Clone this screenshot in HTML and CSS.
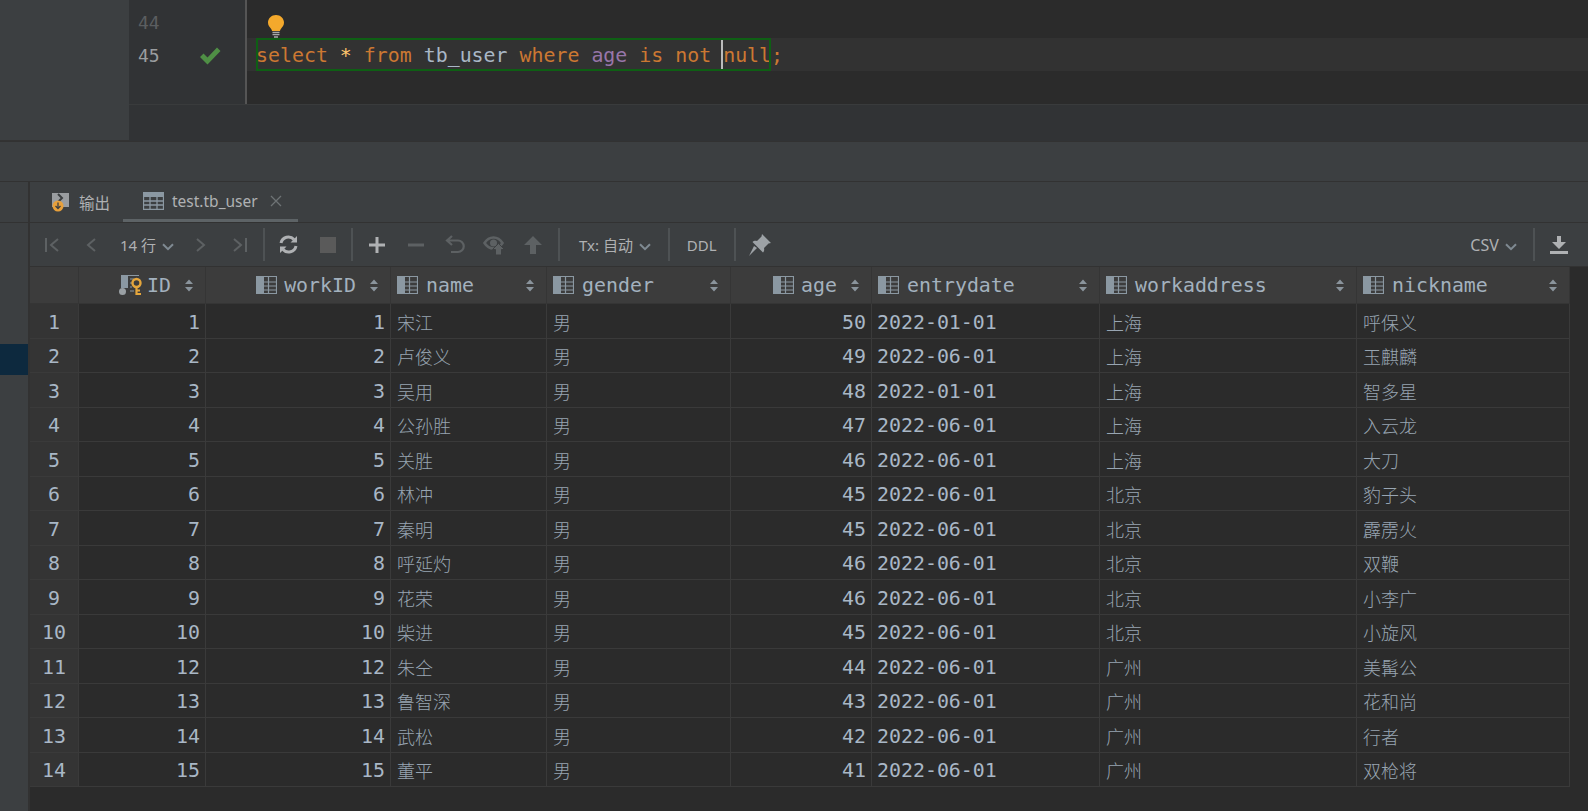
FILE: index.html
```html
<!DOCTYPE html>
<html lang="zh">
<head>
<meta charset="utf-8">
<title>test.tb_user</title>
<link rel="stylesheet" href="styles.css">
</head>
<body>
<svg class="defs" width="0" height="0">
  <symbol id="col" viewBox="0 0 21 18">
    <rect x="0" y="0" width="8" height="18" fill="#8b98a2"/>
    <path d="M8 .5H20.500V17.500H8M12.500 .5V17.500M8 6H20.500M8 10H20.500M8 14H20.500" fill="none" stroke="#8b98a2" stroke-width="1.200"/>
  </symbol>
  <symbol id="sort" viewBox="0 0 8 13">
    <path d="M4 .5L8 5H0ZM4 12.500L0 8H8Z" fill="#8a949c"/>
  </symbol>
  <symbol id="chev" viewBox="0 0 12 8">
    <path d="M1 1.200L6 6.200L11 1.200" fill="none" stroke="#7f8a92" stroke-width="2"/>
  </symbol>
</svg>

<section class="editor-area">
  <div class="side-panel"></div>
  <div class="editor-col">
    <div class="editor">
      <div class="gutter">
        <div class="gutter-line dim"><span>44</span></div>
        <div class="gutter-line"><span>45</span>
          <svg class="check" width="22" height="18" viewBox="0 0 22 18"><path d="M1 10L4.500 6.500L8.500 10.500L18 .5L21.500 4L8.500 17.500Z" fill="#4f8f45"/></svg>
        </div>
      </div>
      <div class="code">
        <div class="code-line bulb-line"><svg class="bulb" width="16" height="23" viewBox="0 0 16 23"><path d="M8 0C3.500 0 0 3.400 0 7.600C0 10.400 1.500 12 3 13.800C3.700 14.700 4 15.400 4 16H12C12 15.400 12.300 14.700 13 13.800C14.500 12 16 10.400 16 7.600C16 3.400 12.500 0 8 0Z" fill="#f4a92c"/><path d="M4.500 17.500H11.500M4.500 19.700H11.500M6 22H10" stroke="#a9a9a9" stroke-width="1.300"/></svg></div>
        <div class="code-line current"><span class="stmt"><span class="kw">select</span> <span class="star">*</span> <span class="kw">from</span> <span class="id">tb_user</span> <span class="kw">where</span> <span class="col-ref">age</span> <span class="kw">is</span> <span class="kw">not</span> <span class="caret kw">null</span></span><span class="kw">;</span></div>
      </div>
    </div>
    <div class="editor-foot"></div>
  </div>
</section>
<div class="status-bar"></div>

<section class="workspace">
  <aside class="rail"><div class="rail-top"></div><div class="rail-sel"></div></aside>
  <div class="results">
    <nav class="tabs">
      <div class="tab">
        <svg width="20" height="20" viewBox="0 0 20 20"><rect x="1" y="1" width="17" height="14" fill="#9a9da0"/><path d="M7 2L11 6L7 10" fill="none" stroke="#3c3f41" stroke-width="2"/><circle cx="7" cy="14" r="5.500" fill="#e8a03a"/><path d="M7 10.500V16M4.500 14L7 16.500L9.500 14" fill="none" stroke="#3c3f41" stroke-width="1.300"/></svg>
        <span>输出</span>
      </div>
      <div class="tab active">
        <svg width="21" height="18" viewBox="0 0 21 18"><path d="M.5 .5H20.500V17.500H.5ZM7 5V17.500M14 5V17.500M.5 9H20.500M.5 13H20.500" fill="none" stroke="#8b98a2" stroke-width="1.300"/><rect width="21" height="5" fill="#8b98a2"/></svg>
        <span>test.tb_user</span>
        <svg class="close" width="12" height="12" viewBox="0 0 12 12"><path d="M1 1L11 11M11 1L1 11" stroke="#6e7375" stroke-width="1.300"/></svg>
      </div>
    </nav>

    <div class="toolbar">
      <span class="btn"><svg width="16" height="16" viewBox="0 0 16 16"><path d="M2 1V15M14 2L7 8L14 14" fill="none" stroke="#5d6163" stroke-width="2"/></svg></span>
      <span class="btn"><svg width="12" height="16" viewBox="0 0 12 16"><path d="M10 2L3 8L10 14" fill="none" stroke="#5d6163" stroke-width="2"/></svg></span>
      <span class="rows-pick">14 行 <svg width="12" height="8"><use href="#chev"/></svg></span>
      <span class="btn"><svg width="12" height="16" viewBox="0 0 12 16"><path d="M2 2L9 8L2 14" fill="none" stroke="#5d6163" stroke-width="2"/></svg></span>
      <span class="btn"><svg width="16" height="16" viewBox="0 0 16 16"><path d="M14 1V15M2 2L9 8L2 14" fill="none" stroke="#5d6163" stroke-width="2"/></svg></span>
      <i class="sep"></i>
      <span class="btn"><svg width="19" height="19" viewBox="0 0 19 19"><path d="M2 8A7.500 7.500 0 0 1 15 4.500M17 11A7.500 7.500 0 0 1 4 14.500" fill="none" stroke="#afb1b3" stroke-width="3"/><path d="M11.500 7.500H18V1ZM7.500 11.500H1V18Z" fill="#afb1b3"/></svg></span>
      <span class="btn"><svg width="16" height="16"><rect width="16" height="16" fill="#5a5a5a"/></svg></span>
      <i class="sep"></i>
      <span class="btn"><svg width="16" height="16" viewBox="0 0 16 16"><path d="M8 0V16M0 8H16" stroke="#afb1b3" stroke-width="3"/></svg></span>
      <span class="btn"><svg width="16" height="16" viewBox="0 0 16 16"><path d="M0 8H16" stroke="#5d6163" stroke-width="3"/></svg></span>
      <span class="btn"><svg width="20" height="20" viewBox="0 0 20 20"><path d="M7 1L2 5.500L7 10M2.500 5.500H13A5.500 5.500 0 0 1 13 17H6" fill="none" stroke="#5d6163" stroke-width="2.200"/></svg></span>
      <span class="btn"><svg width="22" height="22" viewBox="0 0 22 22"><path d="M1.500 9C4 5 7.500 3.500 10.500 3.500C13.500 3.500 17 5 19.500 9C17 13 13.500 14.500 10.500 14.500C7.500 14.500 4 13 1.500 9Z" fill="none" stroke="#5d6163" stroke-width="2.600"/><circle cx="10.500" cy="9" r="3.500" fill="#5d6163"/><path d="M15.500 9.500L21.500 15.500H18.500V21H12.500V15.500H9.500Z" fill="#5d6163" stroke="#3c3f41" stroke-width="1"/></svg></span>
      <span class="btn"><svg width="18" height="18" viewBox="0 0 18 18"><path d="M9 0L18 9H12V18H6V9H0Z" fill="#5d6163"/></svg></span>
      <i class="sep tx-sep"></i>
      <span class="tb-text tx">Tx: 自动 <svg width="12" height="8"><use href="#chev"/></svg></span>
      <i class="sep wide"></i>
      <span class="tb-text">DDL</span>
      <i class="sep wide"></i>
      <span class="pin"><svg width="22" height="22" viewBox="0 0 22 22"><path d="M13 0L22 9L19.500 9.500L15 14C15.500 16 15 17.500 14 18.500L3.500 8C4.500 7 6 6.500 8 7L12.500 2.500Z M8 14L0 22L5 12Z" fill="#9da2a6"/></svg></span>
      <span class="tb-text csv">CSV <svg width="12" height="8"><use href="#chev"/></svg></span>
      <i class="sep csv-sep"></i>
      <span class="dl"><svg width="18" height="18" viewBox="0 0 18 18"><path d="M7 0H11V6H16L9 13L2 6H7Z" fill="#afb1b3"/><rect y="15" width="18" height="3" fill="#afb1b3"/></svg></span>
    </div>

    <div class="grid">
      <div class="hd corner"></div>
      <div class="hd right"><svg class="ic key-ic" width="23" height="20" viewBox="0 0 23 20"><rect x="2" y="0" width="7" height="13" fill="#8b98a2"/><path d="M9 .5H20M11 4H15M11 8H14M11 12H13M11 16H15" stroke="#8b98a2" stroke-width="1.200"/><circle cx="3.500" cy="16.500" r="3.500" fill="#9aa0a4"/><circle cx="17.500" cy="8" r="4" fill="none" stroke="#e5a63c" stroke-width="2.400"/><path d="M17.500 12V20M17.500 19H22M17.500 15.500H21" stroke="#e5a63c" stroke-width="2.200" fill="none"/></svg><span>ID</span><svg class="sort" width="8" height="13"><use href="#sort"/></svg></div>
      <div class="hd right"><svg class="ic" width="21" height="18"><use href="#col"/></svg><span>workID</span><svg class="sort" width="8" height="13"><use href="#sort"/></svg></div>
      <div class="hd"><svg class="ic" width="21" height="18"><use href="#col"/></svg><span>name</span><svg class="sort" width="8" height="13"><use href="#sort"/></svg></div>
      <div class="hd"><svg class="ic" width="21" height="18"><use href="#col"/></svg><span>gender</span><svg class="sort" width="8" height="13"><use href="#sort"/></svg></div>
      <div class="hd right"><svg class="ic" width="21" height="18"><use href="#col"/></svg><span>age</span><svg class="sort" width="8" height="13"><use href="#sort"/></svg></div>
      <div class="hd"><svg class="ic" width="21" height="18"><use href="#col"/></svg><span>entrydate</span><svg class="sort" width="8" height="13"><use href="#sort"/></svg></div>
      <div class="hd"><svg class="ic" width="21" height="18"><use href="#col"/></svg><span>workaddress</span><svg class="sort" width="8" height="13"><use href="#sort"/></svg></div>
      <div class="hd"><svg class="ic" width="21" height="18"><use href="#col"/></svg><span>nickname</span><svg class="sort" width="8" height="13"><use href="#sort"/></svg></div>

      <div class="rn">1</div><div class="c n">1</div><div class="c n">1</div><div class="c z">宋江</div><div class="c z">男</div><div class="c n">50</div><div class="c d">2022-01-01</div><div class="c z">上海</div><div class="c z">呼保义</div>
      <div class="rn">2</div><div class="c n">2</div><div class="c n">2</div><div class="c z">卢俊义</div><div class="c z">男</div><div class="c n">49</div><div class="c d">2022-06-01</div><div class="c z">上海</div><div class="c z">玉麒麟</div>
      <div class="rn">3</div><div class="c n">3</div><div class="c n">3</div><div class="c z">吴用</div><div class="c z">男</div><div class="c n">48</div><div class="c d">2022-01-01</div><div class="c z">上海</div><div class="c z">智多星</div>
      <div class="rn">4</div><div class="c n">4</div><div class="c n">4</div><div class="c z">公孙胜</div><div class="c z">男</div><div class="c n">47</div><div class="c d">2022-06-01</div><div class="c z">上海</div><div class="c z">入云龙</div>
      <div class="rn">5</div><div class="c n">5</div><div class="c n">5</div><div class="c z">关胜</div><div class="c z">男</div><div class="c n">46</div><div class="c d">2022-06-01</div><div class="c z">上海</div><div class="c z">大刀</div>
      <div class="rn">6</div><div class="c n">6</div><div class="c n">6</div><div class="c z">林冲</div><div class="c z">男</div><div class="c n">45</div><div class="c d">2022-06-01</div><div class="c z">北京</div><div class="c z">豹子头</div>
      <div class="rn">7</div><div class="c n">7</div><div class="c n">7</div><div class="c z">秦明</div><div class="c z">男</div><div class="c n">45</div><div class="c d">2022-06-01</div><div class="c z">北京</div><div class="c z">霹雳火</div>
      <div class="rn">8</div><div class="c n">8</div><div class="c n">8</div><div class="c z">呼延灼</div><div class="c z">男</div><div class="c n">46</div><div class="c d">2022-06-01</div><div class="c z">北京</div><div class="c z">双鞭</div>
      <div class="rn">9</div><div class="c n">9</div><div class="c n">9</div><div class="c z">花荣</div><div class="c z">男</div><div class="c n">46</div><div class="c d">2022-06-01</div><div class="c z">北京</div><div class="c z">小李广</div>
      <div class="rn">10</div><div class="c n">10</div><div class="c n">10</div><div class="c z">柴进</div><div class="c z">男</div><div class="c n">45</div><div class="c d">2022-06-01</div><div class="c z">北京</div><div class="c z">小旋风</div>
      <div class="rn">11</div><div class="c n">12</div><div class="c n">12</div><div class="c z">朱仝</div><div class="c z">男</div><div class="c n">44</div><div class="c d">2022-06-01</div><div class="c z">广州</div><div class="c z">美髯公</div>
      <div class="rn">12</div><div class="c n">13</div><div class="c n">13</div><div class="c z">鲁智深</div><div class="c z">男</div><div class="c n">43</div><div class="c d">2022-06-01</div><div class="c z">广州</div><div class="c z">花和尚</div>
      <div class="rn">13</div><div class="c n">14</div><div class="c n">14</div><div class="c z">武松</div><div class="c z">男</div><div class="c n">42</div><div class="c d">2022-06-01</div><div class="c z">广州</div><div class="c z">行者</div>
      <div class="rn">14</div><div class="c n">15</div><div class="c n">15</div><div class="c z">董平</div><div class="c z">男</div><div class="c n">41</div><div class="c d">2022-06-01</div><div class="c z">广州</div><div class="c z">双枪将</div>
    </div>
  </div>
</section>
</body>
</html>
```
FILE: styles.css
```css
* { box-sizing: border-box; }
html, body { margin: 0; height: 811px; overflow: hidden; background: #2b2b2b; }
body { display: flex; flex-direction: column; color: #a9b7c6; font-family: "Noto Sans", "Noto Sans CJK SC", sans-serif; }
.defs { position: absolute; }

.editor-area { display: flex; height: 141px; flex: none; }
.side-panel { width: 129px; background: #3c3f41; border-bottom: 1px solid #333; }
.editor-col { flex: 1; display: flex; flex-direction: column; background: #313335; }
.editor { display: flex; height: 105px; border-bottom: 1px solid #393b3c; }
.gutter { width: 118px; padding-top: 5px; background: #313335; border-right: 2px solid #555; }
.gutter-line { height: 33px; display: flex; align-items: center; padding: 2px 0 0 9px; font: 18px/33px "DejaVu Sans Mono", monospace; color: #9a9d9f; }
.gutter-line.dim { color: #5b5e60; }
.check { margin-left: 39px; }
.code { flex: 1; padding-top: 5px; background: #2b2b2b; }
.code-line { height: 33px; padding-left: 9px; font: 19.900px/33px "DejaVu Sans Mono", monospace; white-space: pre; }
.code-line.bulb-line { padding: 10px 0 0 21px; }
.bulb { display: block; }
.code-line.current { background: #323232; height: 33px; }
.stmt { display: inline-block; height: 33px; line-height: 35px; outline: 2px solid #0e5f14; outline-offset: -2px; }
.kw { color: #cc7832; }
.star { color: #ffc66d; }
.id { color: #a9b7c6; }
.col-ref { color: #9876aa; }
.caret { display: inline-block; height: 31px; box-shadow: -2px 0 0 #bbb; }
.editor-foot { flex: 1; }

.status-bar { height: 41px; flex: none; background: #3c3f41; border-top: 1px solid #323232; border-bottom: 1px solid #323232; }

.workspace { flex: 1; display: flex; min-height: 0; }
.rail { width: 30px; flex: none; background: #3c3f41; border-right: 2px solid #323232; }
.rail-top { height: 41px; border-bottom: 1px solid #323232; }
.rail-sel { height: 31px; margin-top: 121px; background: #0d293e; }
.results { flex: 1; display: flex; flex-direction: column; min-width: 0; }

.tabs { display: flex; height: 41px; flex: none; background: #3c3f41; border-bottom: 1px solid #323232; }
.tab { display: flex; align-items: center; font-size: 15.500px; color: #afb1b3; height: 40px; }
.tab:first-child { padding-left: 21px; width: 93px; gap: 8px; }
.tab.active { width: 175px; padding-left: 20px; gap: 8px; border-bottom: 3px solid #5d6366; }
.close { margin-left: 4px; }

.toolbar { display: flex; align-items: center; height: 44px; flex: none; padding: 0 20px 0 2px; background: #3c3f41; border-bottom: 1px solid #323232; }
.btn { width: 39px; display: flex; justify-content: center; align-items: center; }
.rows-pick { width: 61px; margin-left: 10px; font-size: 15px; white-space: nowrap; color: #afb1b3; }
.rows-pick svg, .tb-text svg { margin-left: 2px; }
.sep { width: 2px; height: 33px; margin: 0 4px; background: #4e5254; flex: none; }
.sep.tx-sep { margin: 0 19px 0 6px; }
.sep.wide { margin: 0 17px; }
.tb-text { font-size: 15px; white-space: nowrap; color: #afb1b3; }
.pin { display: flex; margin-left: -4px; }
.csv { margin-left: auto; font-size: 16px; }
.sep.csv-sep { margin: 0 15px 0 16px; }
.dl { display: flex; }

.grid { display: grid; grid-template-columns: 49px 127px 185px 156px 184px 141px 228px 257px 213px; grid-template-rows: 37px repeat(14, 34.500px); width: 1540px; font: 19.900px "DejaVu Sans Mono", monospace; flex: none; }
.hd { display: flex; align-items: center; padding: 0 12px 0 6px; background: #3c3c3c; border-right: 1px solid #353535; border-bottom: 1px solid #353535; color: #a3b1be; }
.hd.right { justify-content: flex-end; }
.hd .ic { margin-right: 8px; flex: none; }
.hd.right .ic { margin-right: 7px; }
.hd.right .key-ic { margin-right: 5px; }
.hd .sort { flex: none; margin-left: auto; }
.hd.right .sort { margin-left: 14px; }
.rn, .c { display: flex; align-items: center; padding-top: 3px; border-bottom: 1px solid #3a3a3a; white-space: nowrap; }
.rn { justify-content: center; background: #343434; border-right: 1px solid #3a3a3a; }
.c { padding-left: 6px; padding-right: 6px; background: #2b2b2b; border-right: 1px solid #3a3a3a; }
.c.n { justify-content: flex-end; padding-right: 5px; }
.c.d { padding-left: 5px; }
.c.z { padding-top: 2px; font: 300 18px "Noto Sans CJK SC", sans-serif; color: #98a5b2; }
```
